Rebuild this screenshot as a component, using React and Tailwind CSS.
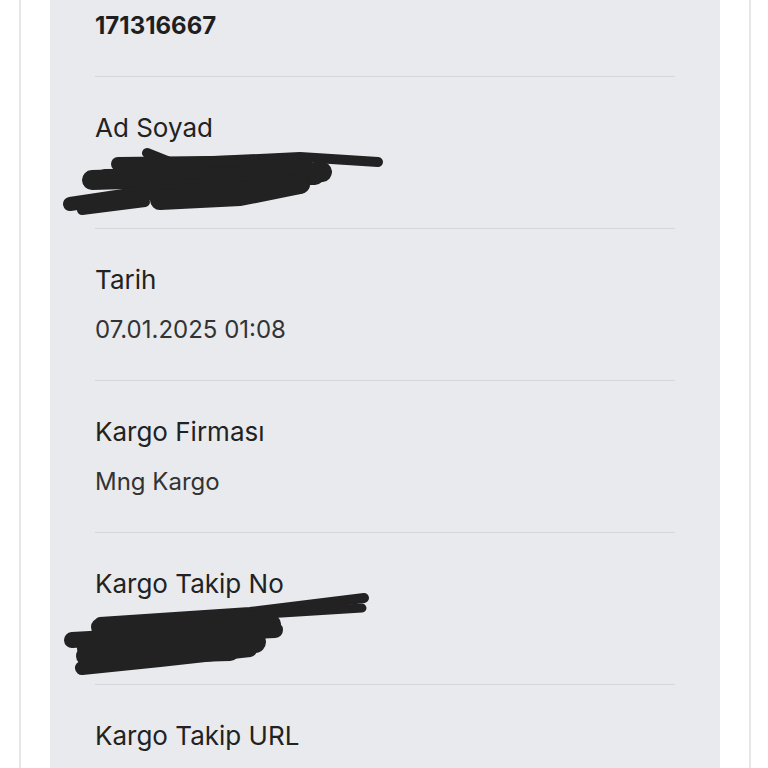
import React from "react";

const rows = [
  { label: "Ad Soyad", value: "" },
  { label: "Tarih", value: "07.01.2025 01:08" },
  { label: "Kargo Firması", value: "Mng Kargo" },
  { label: "Kargo Takip No", value: "" },
  { label: "Kargo Takip URL", value: "" },
];

function Scribbles() {
  // karalanmış (gizlenmiş) alanlar
  return (
    <svg
      className="absolute left-0 top-0 pointer-events-none"
      width="768"
      height="768"
      viewBox="0 0 768 768"
      fill="none"
    >
      <g stroke="#222" strokeLinecap="round" strokeLinejoin="round">
        <path d="M147 153 L172 163 L300 157 L378 162" strokeWidth="10" />
        <path d="M118 164 L305 162" strokeWidth="14" />
        <path d="M92 180 L300 174 L322 172" strokeWidth="20" />
        <path d="M105 178 L315 176" strokeWidth="18" />
        <path d="M150 190 L300 184" strokeWidth="20" />
        <path d="M70 204 L150 192 L260 188" strokeWidth="14" />
        <path d="M160 200 L240 196 L300 184" strokeWidth="20" />
        <path d="M82 210 L145 202" strokeWidth="10" />

        <path d="M100 622 L250 612 L364 598" strokeWidth="10" />
        <path d="M250 615 L362 608" strokeWidth="9" />
        <path d="M100 627 L272 624" strokeWidth="18" />
        <path d="M72 640 L180 634 L275 630" strokeWidth="16" />
        <path d="M88 648 L255 642" strokeWidth="22" />
        <path d="M85 656 L230 652" strokeWidth="18" />
        <path d="M82 668 L160 660 L250 650" strokeWidth="14" />
      </g>
    </svg>
  );
}

export default function App() {
  return (
    <div
      className="relative w-[768px] h-[768px] overflow-hidden bg-white"
      style={{ fontFamily: "Inter, 'Noto Sans', sans-serif" }}
    >
      <div className="ml-[19px] w-[732px] h-full border-x-2 border-[#e6e6e6] px-[29px]">
        <div className="h-full bg-[#e8eaed] px-[45px]">
          <div className="pt-[10px] pb-[34px]">
            <p className="text-[24px] leading-8 font-bold text-[#1f1f1f]">171316667</p>
          </div>
          {rows.map((r) => (
            <div
              key={r.label}
              className="border-t border-[#d3d6da] pt-[35px] pb-[34px]"
            >
              <p className="text-[26px] leading-8 text-[#222]">{r.label}</p>
              <p className="mt-[18px] h-8 text-[24px] leading-8 text-[#333]">
                {r.value}
              </p>
            </div>
          ))}
        </div>
      </div>
      <Scribbles />
    </div>
  );
}
